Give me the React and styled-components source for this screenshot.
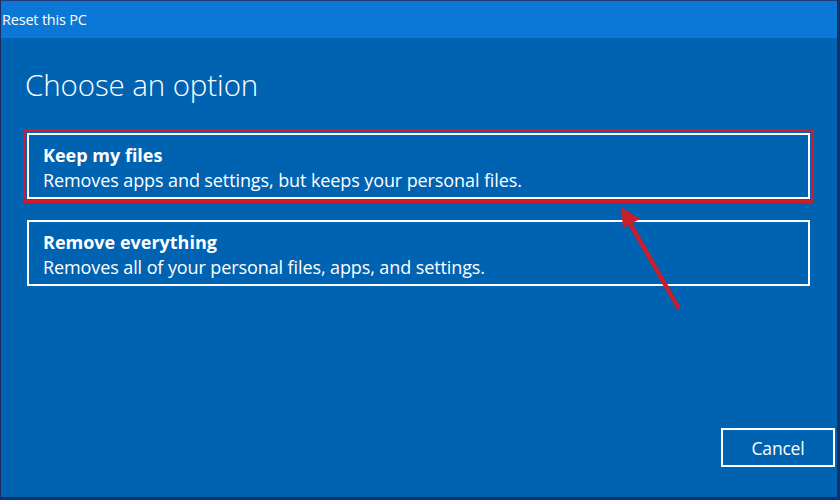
import React from 'react'
import styled, { createGlobalStyle } from 'styled-components'

const GlobalStyle = createGlobalStyle`
  html, body {
    margin: 0;
    padding: 0;
    background: #14306a;
  }
  body {
    font-family: 'Open Sans', 'Noto Sans', 'Liberation Sans', sans-serif;
    color: #fff;
  }
`

const Window = styled.div`
  position: relative;
  width: 836px;
  height: 496px;
  border: 1px solid #1b2d63;
  border-top-color: #213a7a;
  display: flex;
  flex-direction: column;
  background: #0063b1;
  overflow: hidden;
`

const TitleBar = styled.div`
  height: 37px;
  background: #0a78d4;
  display: flex;
  align-items: center;
  padding-left: 1px;
  font-size: 14.5px;
  letter-spacing: -0.2px;
  color: #fff;
`

const Content = styled.div`
  flex: 1;
  display: flex;
  flex-direction: column;
  padding: 30px 0 0 26px;
`

const Heading = styled.h1`
  margin: 0 0 31px -2px;
  font-weight: 300;
  font-size: 29.5px;
  line-height: 34px;
  letter-spacing: -0.1px;
  color: #fff;
`

const OptionList = styled.div`
  display: flex;
  flex-direction: column;
  gap: 21px;
  width: 783px;
`

const OptionCard = styled.div`
  box-sizing: border-box;
  height: 66px;
  border: 2px solid #fff;
  padding: 9px 14px 0;
  display: flex;
  flex-direction: column;
  gap: 3px;
  outline: ${(p) => (p.$highlighted ? '3px solid #cc1d2c' : 'none')};
  outline-offset: 1px;
`

const OptionTitle = styled.div`
  font-weight: 700;
  font-size: 18px;
  line-height: 22px;
`

const OptionDesc = styled.div`
  font-size: 18px;
  line-height: 22px;
  letter-spacing: -0.1px;
`

const Footer = styled.div`
  margin-top: auto;
  display: flex;
  justify-content: flex-end;
  padding: 0 2px 30px 0;
`

const CancelButton = styled.button`
  box-sizing: border-box;
  width: 114px;
  height: 39px;
  border: 2px solid #fff;
  background: transparent;
  color: #fff;
  font-family: inherit;
  font-size: 17.5px;
  letter-spacing: -0.2px;
  cursor: pointer;
`

const Annotation = styled.svg`
  position: absolute;
  left: 0;
  top: 0;
  pointer-events: none;
`

const options = [
  {
    title: 'Keep my files',
    desc: 'Removes apps and settings, but keeps your personal files.',
    highlighted: true,
  },
  {
    title: 'Remove everything',
    desc: 'Removes all of your personal files, apps, and settings.',
  },
]

export default function App() {
  return (
    <>
      <GlobalStyle />
      <Window>
        <TitleBar>Reset this PC</TitleBar>
        <Content>
          <Heading>Choose an option</Heading>
          <OptionList>
            {options.map((o) => (
              <OptionCard key={o.title} $highlighted={o.highlighted}>
                <OptionTitle>{o.title}</OptionTitle>
                <OptionDesc>{o.desc}</OptionDesc>
              </OptionCard>
            ))}
          </OptionList>
          <Footer>
            <CancelButton>Cancel</CancelButton>
          </Footer>
        </Content>
        <Annotation width="836" height="496" viewBox="0 0 836 496">
          <line x1="677" y1="306" x2="627" y2="219" stroke="#c81f2d" strokeWidth="4.5" strokeLinecap="round" />
          <polygon points="620,206 639,218 622,227" fill="#c81f2d" />
        </Annotation>
      </Window>
    </>
  )
}
